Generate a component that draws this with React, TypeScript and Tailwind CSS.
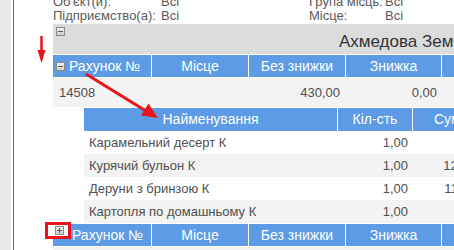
import React from "react";

const FONT = { fontFamily: '"Liberation Sans", Arial, sans-serif' };

type Item = { name: string; qty: string; sum: string };

const items: Item[] = [
  { name: "Карамельний десерт К", qty: "1,00", sum: "9,00" },
  { name: "Курячий бульон К", qty: "1,00", sum: "125,00" },
  { name: "Деруни з бринзою К", qty: "1,00", sum: "115,00" },
  { name: "Картопля по домашньому К", qty: "1,00", sum: "8,00" },
];

function ToggleBox({ sign }: { sign: "-" | "+" }) {
  return (
    <span className="relative inline-block w-[9px] h-[9px] border border-[#8a8a8a] bg-gradient-to-b from-[#f2f2f2] to-[#cfcfcf] shrink-0">
      <span className="absolute left-[1px] right-[1px] top-[3px] h-[1px] bg-[#555]" />
      {sign === "+" && <span className="absolute top-[1px] bottom-[1px] left-[3px] w-[1px] bg-[#555]" />}
    </span>
  );
}

function InvoiceHeader({ first }: { first?: boolean }) {
  return (
    <div className="grid grid-cols-[99px_97px_97px_96px_120px] h-[22px] text-white text-[14px]">
      <div className={`flex items-center border-r border-white ${first ? "bg-[#5d9be6] pl-[3px]" : "bg-[#5d9be6] pl-[19px]"}`}>
        {first && <ToggleBox sign="-" />}
        <span className={first ? "ml-[4px]" : ""}>Рахунок №</span>
      </div>
      <div className="flex items-center justify-center bg-[#5d9be6] border-r border-white">Місце</div>
      <div className="flex items-center justify-center bg-[#5d9be6] border-r border-white">Без знижки</div>
      <div className="flex items-center justify-center bg-[#5d9be6] border-r border-white">Знижка</div>
      <div className="bg-[#5d9be6]" />
    </div>
  );
}

export default function App() {
  return (
    <div className="relative w-[454px] h-[250px] overflow-hidden bg-white flex" style={FONT}>
      {/* side rail */}
      <div className="w-[11px] shrink-0 bg-[#e6e8ea]" />
      <div className="w-[2px] shrink-0 bg-white" />
      <div className="w-[1px] shrink-0 bg-[#6d6d6d]" />

      <div className="pl-[39px] w-[520px] shrink-0">
        {/* report filters */}
        <div className="mt-[-5px] text-[13px] leading-[14px] text-[#5a5a5a]">
          <div className="flex">
            <span className="w-[108px]">Об'єкт(и):</span>
            <span className="w-[148px]">Всі</span>
            <span className="w-[76px]">Група місць:</span>
            <span>Всі</span>
          </div>
          <div className="flex">
            <span className="w-[108px]">Підприємство(а):</span>
            <span className="w-[148px]">Всі</span>
            <span className="w-[76px]">Місце:</span>
            <span>Всі</span>
          </div>
        </div>

        {/* waiter group */}
        <div className="mt-[1px] h-[30px] bg-[#dcdcdc] pl-[3px] pt-[3px] flex">
          <ToggleBox sign="-" />
          <span className="ml-[274px] mt-[5px] text-[17px] leading-[20px] text-[#333] whitespace-nowrap">
            Ахмедова Земфіра
          </span>
        </div>

        <div className="h-[1px] bg-white" />
        <InvoiceHeader first />

        {/* invoice row */}
        <div className="mt-[1px] grid grid-cols-[99px_97px_97px_96px_120px] h-[29px] bg-[#f3f3f3] text-[13px] text-[#4f4f4f] items-center">
          <div className="pl-[6px]">14508</div>
          <div />
          <div className="text-right pr-[6px]">430,00</div>
          <div className="text-right pr-[5px]">0,00</div>
          <div />
        </div>

        {/* invoice items */}
        <div className="ml-[31px] mt-[1px]">
          <div className="grid grid-cols-[254px_75px_120px] h-[23px] text-white text-[14px]">
            <div className="flex items-center justify-center bg-[#5d9be6] border-r border-white">Найменування</div>
            <div className="flex items-center justify-center bg-[#5d9be6] border-r border-white">Кіл-сть</div>
            <div className="flex items-center pl-[21px] bg-[#5d9be6] whitespace-nowrap">Сума</div>
          </div>
          {items.map((it, i) => (
            <div
              key={it.name}
              className={`grid grid-cols-[254px_75px_120px] h-[23px] items-center text-[13px] text-[#4f4f4f] ${i % 2 ? "bg-[#f3f3f3]" : "bg-white"}`}
            >
              <div className="pl-[5px] whitespace-nowrap">{it.name}</div>
              <div className="text-right pr-[5px]">{it.qty}</div>
              <div className="text-right pr-[50px]">{it.sum}</div>
            </div>
          ))}
        </div>

        <div className="mt-[1px]">
          <InvoiceHeader />
        </div>
        <div className="mt-[1px] h-[10px] bg-[#f3f3f3]" />
      </div>

      {/* annotation: collapse marker */}
      <div className="absolute left-[45px] top-[222px] w-[26px] h-[17px] border-[3px] border-[#e8141b] bg-white flex items-center justify-center pl-[2px]">
        <ToggleBox sign="+" />
      </div>

      {/* annotation arrows */}
      <svg className="absolute inset-0 pointer-events-none" width="454" height="250" viewBox="0 0 454 250">
        <line x1="41.5" y1="36" x2="41.5" y2="52" stroke="#e8141b" strokeWidth="2.5" />
        <polygon points="37.5,50 45.5,50 41.5,63" fill="#e8141b" />
        <line x1="86" y1="74" x2="146" y2="111" stroke="#e8141b" strokeWidth="3" />
        <polygon points="158,118 141,115.5 148.5,103.5" fill="#e8141b" />
      </svg>
    </div>
  );
}
